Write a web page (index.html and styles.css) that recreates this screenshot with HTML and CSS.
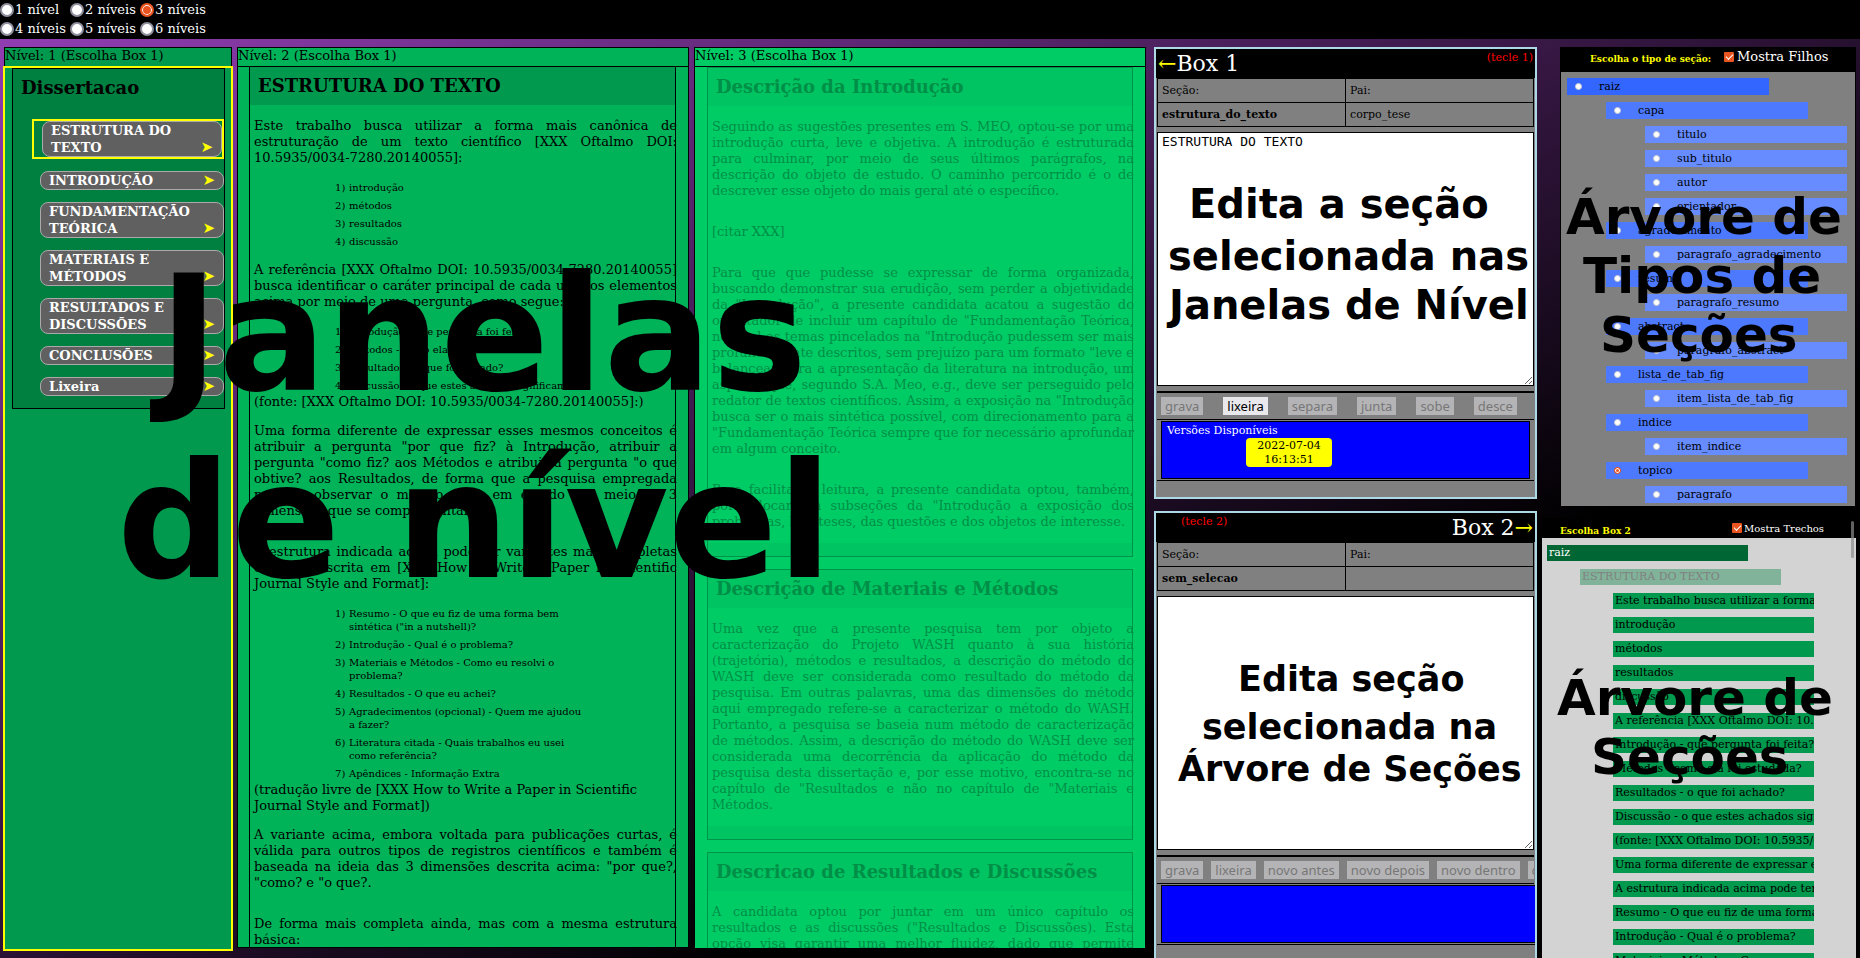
FILE: index.html
```html
<!DOCTYPE html>
<html lang="pt-BR">
<head>
<meta charset="utf-8">
<title>Dissertacao</title>
<link rel="stylesheet" href="styles.css">
</head>
<body>
<header class="topbar">
  <label><input type="radio" name="niveis">1 nível</label>
  <label><input type="radio" name="niveis">2 níveis</label>
  <label><input type="radio" name="niveis" checked>3 níveis</label>
  <label><input type="radio" name="niveis">4 níveis</label>
  <label><input type="radio" name="niveis">5 níveis</label>
  <label><input type="radio" name="niveis">6 níveis</label>
</header>

<main class="workspace">
  <section class="level level-1">
    <div class="level-head">Nível: 1 (Escolha Box 1)</div>
    <div class="level-body active">
      <nav class="outline">
        <h2>Dissertacao</h2>
        <div class="chosen"><button class="item"><span>ESTRUTURA DO TEXTO</span><i>➤</i></button></div>
        <button class="item"><span>INTRODUÇÃO</span><i>➤</i></button>
        <button class="item"><span>FUNDAMENTAÇÃO TEÓRICA</span><i>➤</i></button>
        <button class="item"><span>MATERIAIS E MÉTODOS</span><i>➤</i></button>
        <button class="item"><span>RESULTADOS E DISCUSSÕES</span><i>➤</i></button>
        <button class="item"><span>CONCLUSÕES</span><i>➤</i></button>
        <button class="item"><span>Lixeira</span><i>➤</i></button>
      </nav>
    </div>
  </section>

  <section class="level level-2">
    <div class="level-head">Nível: 2 (Escolha Box 1)</div>
    <div class="level-body">
      <article class="text">
        <h2>ESTRUTURA DO TEXTO</h2>
        <p>Este trabalho busca utilizar a forma mais canônica de estruturação de um texto científico [XXX Oftalmo DOI: 10.5935/0034-7280.20140055]:</p>
        <ol>
          <li>introdução</li><li>métodos</li><li>resultados</li><li>discussão</li>
        </ol>
        <p>A referência [XXX Oftalmo DOI: 10.5935/0034-7280.20140055] busca identificar o caráter principal de cada um dos elementos acima por meio de uma pergunta, como segue:</p>
        <ol>
          <li>Introdução - que pergunta foi feita?</li><li>Métodos - como ela foi estudada?</li><li>Resultados - o que foi achado?</li><li>Discussão - o que estes achados significam?</li>
        </ol>
        <div class="source">(fonte: [XXX Oftalmo DOI: 10.5935/0034-7280.20140055]:)</div>
        <p>Uma forma diferente de expressar esses mesmos conceitos é atribuir a pergunta "por que fiz? à Introdução, atribuir a pergunta "como fiz? aos Métodos e atribuir a pergunta "o que obtive? aos Resultados, de forma que a pesquisa empregada permite observar o mesmo dado em estudo por meio de 3 dimensões que se complementam.</p>
        <p class="apart">A estrutura indicada acima pode ter variantes mais completas como a descrita em [XXX How to Write a Paper in Scientific Journal Style and Format]:</p>
        <ol>
          <li>Resumo - O que eu fiz de uma forma bem sintética ("in a nutshell)?</li>
          <li>Introdução - Qual é o problema?</li>
          <li>Materiais e Métodos - Como eu resolvi o problema?</li>
          <li>Resultados - O que eu achei?</li>
          <li>Agradecimentos (opcional) - Quem me ajudou a&nbsp;fazer?</li>
          <li>Literatura citada - Quais trabalhos eu usei como referência?</li>
          <li>Apêndices - Informação Extra</li>
        </ol>
        <div class="source">(tradução livre de [XXX How to Write a Paper in Scientific Journal Style and Format])</div>
        <p>A variante acima, embora voltada para publicações curtas, é válida para outros tipos de registros científicos e também é baseada na ideia das 3 dimensões descrita acima: "por que?, "como? e "o que?.</p>
        <p class="apart">De forma mais completa ainda, mas com a mesma estrutura básica:</p>
      </article>
    </div>
  </section>

  <section class="level level-3">
    <div class="level-head">Nível: 3 (Escolha Box 1)</div>
    <div class="level-body">
      <article class="text faded">
        <h2>Descrição da Introdução</h2>
        <p>Seguindo as sugestões presentes em S. MEO, optou-se por uma introdução curta, leve e objetiva. A introdução é estruturada para culminar, por meio de seus últimos parágrafos, na descrição do objeto de estudo. O caminho percorrido é o de descrever esse objeto do mais geral até o específico.</p>
        <p class="apart">[citar XXX]</p>
        <p class="apart">Para que que pudesse se expressar de forma organizada, buscando demonstrar sua erudição, sem perder a objetividade da "Introdução", a presente candidata acatou a sugestão do orientador de incluir um capítulo de "Fundamentação Teórica, no qual os temas pincelados na "Introdução pudessem ser mais profundamente descritos, sem prejuízo para um formato "leve e balancear para a apresentação da literatura na introdução, um aspecto que, segundo S.A. Meo, e.g., deve ser perseguido pelo redator de textos científicos. Assim, a exposição na "Introdução busca ser o mais sintética possível, com direcionamento para a "Fundamentação Teórica sempre que for necessário aprofundar em algum conceito.</p>
        <p class="apart">Para facilitar a leitura, a presente candidata optou, também, por colocar em subseções da "Introdução a exposição dos problemas, hipóteses, das questões e dos objetos de interesse.</p>
      </article>
      <article class="text faded">
        <h2>Descrição de Materiais e Métodos</h2>
        <p>Uma vez que a presente pesquisa tem por objeto a caracterização do Projeto WASH quanto à sua história (trajetória), métodos e resultados, a descrição do método do WASH deve ser considerada como resultado do método da pesquisa. Em outras palavras, uma das dimensões do método aqui empregado refere-se a caracterizar o método do WASH. Portanto, a pesquisa se baseia num método de caracterização de métodos. Assim, a descrição do método do WASH deve ser considerada uma decorrência da aplicação do método da pesquisa desta dissertação e, por esse motivo, encontra-se no capítulo de "Resultados e não no capítulo de "Materiais e Métodos.</p>
      </article>
      <article class="text faded">
        <h2>Descricao de Resultados e Discussões</h2>
        <p>A candidata optou por juntar em um único capítulo os resultados e as discussões ("Resultados e Discussões). Esta opção visa garantir uma melhor fluidez, dado que permite acompanhar os resultados.</p>
      </article>
    </div>
  </section>

  <section class="boxes">
    <div class="box">
      <div class="box-head"><h3><span class="arrow">←</span>Box 1</h3><span class="hint">(tecle 1)</span></div>
      <table>
        <tr><td>Seção:</td><td>Pai:</td></tr>
        <tr><th scope="row">estrutura_do_texto</th><td>corpo_tese</td></tr>
      </table>
      <textarea aria-label="Texto da seção do Box 1">ESTRUTURA DO TEXTO</textarea>
      <div class="actions wide">
        <button disabled>grava</button><button>lixeira</button><button disabled>separa</button><button disabled>junta</button><button disabled>sobe</button><button disabled>desce</button>
      </div>
      <div class="history"><div class="versions">Versões Disponíveis<button>2022-07-04 16:13:51</button></div></div>
    </div>
    <div class="box">
      <div class="box-head reverse"><h3>Box 2<span class="arrow">→</span></h3><span class="hint">(tecle 2)</span></div>
      <table>
        <tr><td>Seção:</td><td>Pai:</td></tr>
        <tr><th scope="row">sem_selecao</th><td></td></tr>
      </table>
      <textarea aria-label="Texto da seção do Box 2"></textarea>
      <div class="actions">
        <button disabled>grava</button><button disabled>lixeira</button><button disabled>novo antes</button><button disabled>novo depois</button><button disabled>novo dentro</button><button disabled>cola</button>
      </div>
      <div class="history open"><div class="versions"></div></div>
    </div>
  </section>

  <aside class="trees">
    <section class="types">
      <div class="tree-head"><b>Escolha o tipo de seção:</b><label><input type="checkbox" checked>Mostra Filhos</label></div>
      <div class="type-list">
        <label class="d1"><input type="radio" name="tipo">raiz</label>
        <label class="d2"><input type="radio" name="tipo">capa</label>
        <label class="d3"><input type="radio" name="tipo">titulo</label>
        <label class="d3"><input type="radio" name="tipo">sub_titulo</label>
        <label class="d3"><input type="radio" name="tipo">autor</label>
        <label class="d3"><input type="radio" name="tipo">orientador</label>
        <label class="d2"><input type="radio" name="tipo">agradecimento</label>
        <label class="d3"><input type="radio" name="tipo">paragrafo_agradecimento</label>
        <label class="d2"><input type="radio" name="tipo">resumo</label>
        <label class="d3"><input type="radio" name="tipo">paragrafo_resumo</label>
        <label class="d2"><input type="radio" name="tipo">abstract</label>
        <label class="d3"><input type="radio" name="tipo">paragrafo_abstract</label>
        <label class="d2"><input type="radio" name="tipo">lista_de_tab_fig</label>
        <label class="d3"><input type="radio" name="tipo">item_lista_de_tab_fig</label>
        <label class="d2"><input type="radio" name="tipo">indice</label>
        <label class="d3"><input type="radio" name="tipo">item_indice</label>
        <label class="d2"><input type="radio" name="tipo" checked>topico</label>
        <label class="d3"><input type="radio" name="tipo">paragrafo</label>
      </div>
    </section>
    <section class="sections">
      <div class="tree-head small"><b>Escolha Box 2</b><label><input type="checkbox" checked>Mostra Trechos</label></div>
      <span class="thumb"></span>
      <div class="section-list">
        <div class="s1">raiz</div>
        <div class="s2">ESTRUTURA DO TEXTO</div>
        <div class="s3">Este trabalho busca utilizar a forma</div>
        <div class="s3">introdução</div>
        <div class="s3">métodos</div>
        <div class="s3">resultados</div>
        <div class="s3">discussão</div>
        <div class="s3">A referência [XXX Oftalmo DOI: 10.5935/0034</div>
        <div class="s3">Introdução - que pergunta foi feita?</div>
        <div class="s3">Métodos - como ela foi estudada?</div>
        <div class="s3">Resultados - o que foi achado?</div>
        <div class="s3">Discussão - o que estes achados significam?</div>
        <div class="s3">(fonte: [XXX Oftalmo DOI: 10.5935/0034-7280</div>
        <div class="s3">Uma forma diferente de expressar esses</div>
        <div class="s3">A estrutura indicada acima pode ter</div>
        <div class="s3">Resumo - O que eu fiz de uma forma</div>
        <div class="s3">Introdução - Qual é o problema?</div>
        <div class="s3">Materiais e Métodos - Como eu resolvi</div>
      </div>
    </section>
  </aside>

  <div class="note huge n1">Janelas</div>
  <div class="note huge n2">de nível</div>
  <div class="note mid n3">Edita a seção</div>
  <div class="note mid n4">selecionada nas</div>
  <div class="note mid n5">Janelas de Nível</div>
  <div class="note low n6">Edita seção</div>
  <div class="note low n7">selecionada na</div>
  <div class="note low n8">Árvore de Seções</div>
  <div class="note big n9">Árvore de</div>
  <div class="note big n10">Tipos de</div>
  <div class="note big n11">Seções</div>
  <div class="note big n12">Árvore de</div>
  <div class="note big n13">Seções</div>
</main>
</body>
</html>
```

FILE: styles.css
```css
* { box-sizing: border-box; }

body {
  margin: 0;
  height: 100vh;
  display: flex;
  flex-direction: column;
  overflow: hidden;
  font: 13px/16px "DejaVu Serif", serif;
  color: #000;
  background: linear-gradient(to bottom right, #953fb8, #000 70%);
}

h2, h3, p, ol { margin: 0; padding: 0; }
button { font: inherit; border: 0; }

input[type="radio"], input[type="checkbox"] { appearance: none; margin: 0; flex: none; }
input[type="radio"] {
  width: 14px;
  height: 14px;
  border-radius: 50%;
  background: #fff;
  border: 2px solid #8f8f9d;
}
input[type="radio"]:checked { border-color: #e95420; background: #e95420; box-shadow: inset 0 0 0 1px #fff; }
input[type="checkbox"] {
  width: 10px;
  height: 10px;
  border-radius: 1px;
  background: #e95420;
  display: grid;
  place-items: center;
}
input[type="checkbox"]::after {
  content: "";
  width: 6px;
  height: 3px;
  margin-bottom: 2px;
  border: solid #fff;
  border-width: 0 0 1px 1px;
  transform: rotate(-45deg);
}

.topbar {
  flex: none;
  height: 39px;
  display: grid;
  grid-template-columns: repeat(3, 70px);
  grid-auto-rows: 19px;
  align-content: start;
  background: #000;
  color: #fff;
}
.topbar label { display: flex; align-items: center; gap: 1px; white-space: nowrap; }

.workspace {
  flex: 1;
  min-height: 0;
  display: grid;
  grid-template-columns: minmax(0, 228fr) minmax(0, 452fr) minmax(0, 452fr) minmax(0, 386fr) minmax(0, 314fr);
  grid-template-rows: minmax(0, 1fr);
  gap: 5px;
  padding: 8px 4px 0;
}

/* Level windows */
.level { display: flex; flex-direction: column; margin-bottom: 10px; min-height: 0; }
.level-head { flex: none; height: 20px; border: 1px solid #000; }
.level-body { flex: 1; min-height: 0; overflow: hidden; border: solid #000; border-width: 0 1px; padding: 0 12px 0 11px; }
.level-1 { background: #00994d; margin-bottom: 8px; }
.level-2 { background: #00b359; border-bottom: 1px solid #000; }
.level-3 { background: #00cc66; }
.level-3 .level-body { padding-left: 12px; }
.level-1 .active { border: 0; outline: 2px solid #ff0; outline-offset: -1px; padding: 1px 7px 0 8px; }

.outline { border: 1px solid #000; background: #008040; padding: 8px 0 12px; display: flex; flex-direction: column; gap: 12px; }
h2 { font-size: 18px; line-height: 22px; }
.outline h2 { padding: 0 8px; margin-bottom: 8px; }
.item {
  margin-left: 27px;
  display: flex;
  align-items: flex-end;
  padding: 0 8px;
  border: 1px solid #aaa;
  border-radius: 8px;
  background: #606060;
  color: #fff;
  font-weight: bold;
  line-height: 17px;
  text-align: left;
}
.item span { flex: 1; }
.item i { color: #ff0; font-family: "DejaVu Sans", sans-serif; font-size: 15px; font-style: normal; font-weight: normal; }
.chosen { border: 2px solid #ff0; margin: 0 0 0 19px; display: grid; }
.chosen .item { margin-left: 8px; }

.text { border: solid #000; border-width: 0 1px; padding: 0 0 12px; min-height: 100%; }
.text h2 { padding: 8px 8px; background: #00994d; height: 38px; }
.text p, .source { margin: 13px -2px 13px 0; padding-left: 4px; }
.text p { text-align: justify; }
.text .apart { margin-top: 25px; }
.text ol { list-style: none; margin: 13px 0 0 85px; width: 250px; counter-reset: i; font-size: 10px; line-height: 13px; }
.text ol + p { margin-top: 12px; }
.text li { counter-increment: i; display: grid; grid-template-columns: 14px 1fr; padding: 2px 0 3px; }
.text li:last-child { padding-bottom: 2px; }
.text li::before { content: counter(i) ")"; }
.text .source { margin-top: 0; }
.faded { min-height: 0; border: 1px solid #00934a; color: #008f47; margin-bottom: 12px; padding: 0; border-bottom: 0; }
.faded::after { content: ""; display: block; height: 13px; background: #00c462; border-bottom: 1px solid #00934a; }
.text.faded h2 { background: #00c462; }

/* Editing boxes */
.boxes { display: flex; flex-direction: column; gap: 12px; padding-left: 3px; overflow: hidden; }
.box { flex: none; border: 2px solid #add8e6; background: #808080; padding: 0 1px 16px; overflow: hidden; font-size: 11px; line-height: 14px; }
.box-head { height: 29px; margin: 0 -1px; padding: 0 2px; background: #000; display: flex; justify-content: space-between; }
.box-head h3 { font-size: 22px; font-weight: normal; line-height: 29px; color: #fff; }
.arrow { color: #ff0; }
.hint { color: #f00; line-height: 18px; }
.reverse { flex-direction: row-reverse; }
.reverse .hint { padding-left: 23px; }
.box table { width: 100%; table-layout: fixed; border-collapse: collapse; }
.box td, .box th { height: 24px; border: 1px solid #000; padding: 0 4px; text-align: left; }
.box textarea {
  display: block;
  width: 100%;
  height: 254px;
  margin: 5px 0;
  padding: 1px 4px;
  border: 1px solid #000;
  background: #fff;
  color: #000;
  font: 13px/16px "DejaVu Sans Mono", monospace;
}
.actions { border: solid #000; border-width: 2px 0 1px; height: 29px; padding: 0 4px; display: flex; align-items: center; gap: 8px; overflow: hidden; }
.wide { gap: 20px; }
.actions button { flex: none; height: 18px; padding: 0 4px; background: #e9e9ed; color: #000; font: 13px/18px "Noto Sans", sans-serif; }
.actions button:disabled { background: #b4b4b6; color: #777; }
.history { border-bottom: 1px solid #000; padding: 1px 4px; }
.history.open { padding-right: 0; margin-right: -2px; }
.versions { height: 58px; border: 1px solid #000; background: #00f; color: #fff; padding: 2px 5px; }
.versions button { display: block; width: 86px; margin-left: 79px; padding: 1px 8px 0; border-radius: 4px; background: #ff0; color: #000; }

/* Trees */
.trees { display: flex; flex-direction: column; gap: 11px; overflow: hidden; }
.types { flex: none; margin-left: 18px; }
.tree-head { height: 25px; background: #000; color: #fff; display: flex; gap: 13px; padding-left: 30px; }
.tree-head b { color: #ff0; font-size: 9px; line-height: 25px; }
.tree-head label { display: flex; gap: 3px; line-height: 20px; }
.tree-head input { margin-top: 5px; }
.type-list { border: 1px solid #000; border-top: 0; background: #808080; padding: 6px 6px 3px; display: grid; gap: 7px; }
.type-list label { height: 17px; width: 202px; display: flex; align-items: center; gap: 17px; padding-left: 8px; font-size: 11px; }
.type-list input { width: 7px; height: 7px; border-width: 1px; border-color: #c8c8d0; }
.type-list .d1 { background: #3366ff; }
.type-list .d2 { background: #4d79ff; margin-left: 39px; }
.type-list .d3 { background: #668cff; margin-left: 78px; }
.type-list input:checked { border-color: #e95420; }
.sections { flex: 1; min-height: 0; position: relative; overflow: hidden; background: #d3d3d3; }
.tree-head.small { height: 20px; padding: 0 32px 0 18px; justify-content: space-between; }
.small b { font-size: 9px; line-height: 26px; }
.small label { font-size: 10px; line-height: 22px; gap: 2px; }
.section-list { padding: 7px 5px; display: grid; gap: 8px; font-size: 11px; }
.section-list div { width: 201px; height: 16px; line-height: 15px; padding-left: 2px; overflow: hidden; white-space: nowrap; }
.section-list .s1 { background: #006633; color: #fff; }
.section-list .s2 { background: #80b399; color: #808080; margin-left: 33px; }
.section-list .s3 { background: #00994d; margin-left: 66px; }
.thumb { position: absolute; top: 3px; right: 2px; width: 3px; height: 37px; border-radius: 2px; background: rgba(140, 140, 140, .7); }

/* Captions laid over the panels */
.note { position: absolute; font-family: "DejaVu Sans", sans-serif; font-weight: bold; white-space: nowrap; line-height: 1; pointer-events: none; }
.huge { font-size: 160px; }
.big { font-size: 50px; }
.mid { font-size: 40px; }
.low { font-size: 35px; }
.n1 { left: 159px; top: 255px; }
.n2 { left: 117px; top: 442px; }
.n3 { left: 1189px; top: 184px; }
.n4 { left: 1168px; top: 236px; }
.n5 { left: 1169px; top: 285px; }
.n6 { left: 1238px; top: 662px; }
.n7 { left: 1202px; top: 710px; }
.n8 { left: 1178px; top: 752px; }
.n9 { left: 1566px; top: 192px; }
.n10 { left: 1583px; top: 251px; }
.n11 { left: 1600px; top: 310px; }
.n12 { left: 1557px; top: 673px; }
.n13 { left: 1591px; top: 732px; }
```
